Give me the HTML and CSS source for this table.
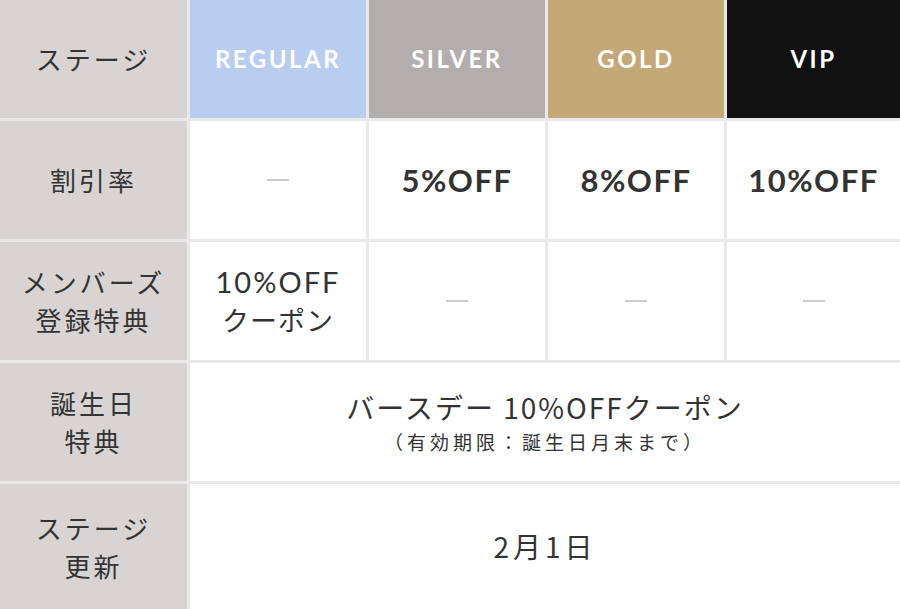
FILE: index.html
```html
<!DOCTYPE html>
<html lang="ja">
<head>
  <meta charset="UTF-8">
  <meta name="viewport" content="width=device-width, initial-scale=1">
  <title>会員ステージ</title>
  <link rel="stylesheet" href="styles.css">
</head>
<body>
  <div class="stage-table">
    <!-- ヘッダー -->
    <div class="cell head">ステージ</div>
    <div class="cell rank regular">REGULAR</div>
    <div class="cell rank silver">SILVER</div>
    <div class="cell rank gold">GOLD</div>
    <div class="cell rank vip">VIP</div>

    <!-- 割引率 -->
    <div class="cell head">割引率</div>
    <div class="cell"><span class="none"></span></div>
    <div class="cell rate">5%OFF</div>
    <div class="cell rate">8%OFF</div>
    <div class="cell rate">10%OFF</div>

    <!-- 登録特典 -->
    <div class="cell head"><p>メンバーズ<br>登録特典</p></div>
    <div class="cell coupon"><p><span class="latin">10%OFF</span><br>クーポン</p></div>
    <div class="cell"><span class="none"></span></div>
    <div class="cell"><span class="none"></span></div>
    <div class="cell"><span class="none"></span></div>

    <!-- 誕生日特典 -->
    <div class="cell head"><p>誕生日<br>特典</p></div>
    <div class="cell wide birthday">
      <p class="main">バースデー 10%OFFクーポン</p>
      <p class="note">（有効期限：誕生日月末まで）</p>
    </div>

    <!-- ステージ更新 -->
    <div class="cell head"><p>ステージ<br>更新</p></div>
    <div class="cell wide update">2月1日</div>
  </div>
</body>
</html>
```

FILE: styles.css
```css
:root {
  --line: #e9e9e9;
  --head: #d8d4d4;
  --text: #333;
  --regular: #b9cdf1;
  --silver: #b2aeae;
  --gold: #c4a877;
  --vip: #111;
  --jp: "Noto Sans CJK JP", "Noto Sans", sans-serif;
  --en: Lato, "Noto Sans CJK JP", sans-serif;
}
*, *::before, *::after { box-sizing: border-box; margin: 0; padding: 0; }
html, body { height: 100%; background: var(--line); }
body { font: 26px/1.4 var(--jp); color: var(--text); }

.stage-table {
  display: grid;
  grid-template-columns: 187px repeat(3, 176px) 1fr;
  grid-template-rows: repeat(4, 118px) 1fr;
  gap: 3px;
  height: 100%;
}
.cell {
  background: #fff;
  display: flex; flex-direction: column; align-items: center; justify-content: center;
  text-align: center;
}
.head { background: var(--head); letter-spacing: 3px; line-height: 38px; }
.rank { font: 700 24px/1 var(--en); letter-spacing: 2.5px; color: #fff; }
.regular { background: var(--regular); }
.silver { background: var(--silver); }
.gold { background: var(--gold); }
.vip { background: var(--vip); }
.rate { font: 700 31px/1 var(--en); letter-spacing: 1.5px; color: #333; }
.none { display: block; width: 22px; height: 2px; background: #cbcbcb; }
.coupon { font-size: 27px; line-height: 38px; letter-spacing: 1px; }
.coupon .latin { font-family: var(--en); font-size: 29px; letter-spacing: 2px; }
.wide { grid-column: 2 / -1; }
.birthday .main { font-size: 28px; line-height: 40px; letter-spacing: 2px; }
.birthday .note { font-size: 19px; line-height: 30px; letter-spacing: 4px; }
.update { font-size: 28px; letter-spacing: 4px; }
```
